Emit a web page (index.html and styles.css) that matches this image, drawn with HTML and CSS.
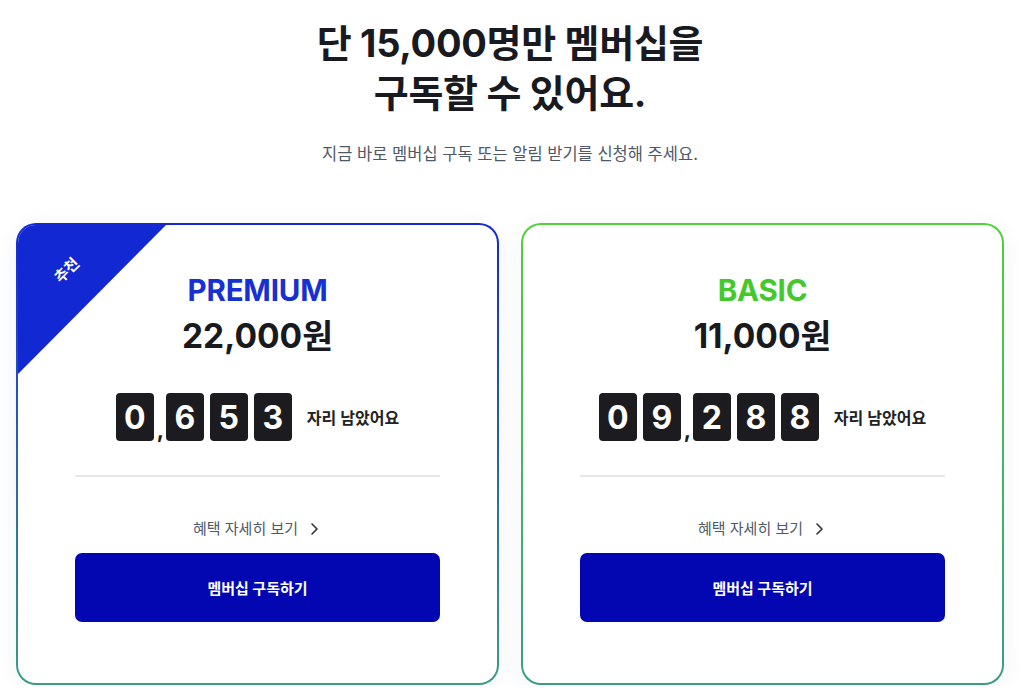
FILE: index.html
```html
<!DOCTYPE html>
<html lang="ko">
<head>
<meta charset="UTF-8">
<meta name="viewport" content="width=device-width, initial-scale=1.0">
<title>멤버십 구독</title>
<link rel="stylesheet" href="styles.css">
</head>
<body>
<div class="page">
  <h1 class="title">단 15,000명만 멤버십을<br>구독할 수 있어요.</h1>
  <p class="subtitle">지금 바로 멤버십 구독 또는 알림 받기를 신청해 주세요.</p>

  <div class="plans">
    <div class="card premium">
      <div class="badge"><span>추천</span></div>
      <h2 class="plan-name">PREMIUM</h2>
      <p class="price">22,000원</p>
      <div class="counter">
        <span class="digit">0</span><span class="comma">,</span><span class="digit">6</span><span class="digit">5</span><span class="digit">3</span>
        <span class="left">자리 남았어요</span>
      </div>
      <hr class="divider">
      <a class="more" href="#">혜택 자세히 보기
        <svg width="16" height="16" viewBox="0 0 16 16"><polyline points="6,3 11,8 6,13" fill="none" stroke="#333" stroke-width="1.6" stroke-linecap="round" stroke-linejoin="round"/></svg>
      </a>
      <button class="subscribe">멤버십 구독하기</button>
    </div>

    <div class="card basic">
      <h2 class="plan-name">BASIC</h2>
      <p class="price">11,000원</p>
      <div class="counter">
        <span class="digit">0</span><span class="digit">9</span><span class="comma">,</span><span class="digit">2</span><span class="digit">8</span><span class="digit">8</span>
        <span class="left">자리 남았어요</span>
      </div>
      <hr class="divider">
      <a class="more" href="#">혜택 자세히 보기
        <svg width="16" height="16" viewBox="0 0 16 16"><polyline points="6,3 11,8 6,13" fill="none" stroke="#333" stroke-width="1.6" stroke-linecap="round" stroke-linejoin="round"/></svg>
      </a>
      <button class="subscribe">멤버십 구독하기</button>
    </div>
  </div>
</div>
</body>
</html>
```

FILE: styles.css
```css
body {
  margin: 0;
  padding: 0;
  background: #fff;
  font-family: Inter, "Noto Sans CJK KR", sans-serif;
  color: #191a1f;
}
.page {
  padding: 18px 17px 0 16px;
}
.title {
  margin: 0;
  text-align: center;
  font-size: 38px;
  line-height: 50px;
  font-weight: 700;
  color: #191a1f;
  letter-spacing: -0.3px;
}
.subtitle {
  margin: 24px 0 0;
  text-align: center;
  font-size: 16.5px;
  line-height: 24px;
  color: #4e5968;
}
.plans {
  display: grid;
  grid-template-columns: 1fr 1fr;
  gap: 22px;
  margin-top: 57px;
}
.card {
  position: relative;
  overflow: hidden;
  border: 2px solid transparent;
  border-radius: 20px;
  padding: 45px 57px 61px;
  text-align: center;
  box-shadow: 0 4px 24px rgba(40, 50, 110, 0.06);
}
.premium {
  background: linear-gradient(#fff, #fff) padding-box,
              linear-gradient(180deg, #1528d3, #3b9c86) border-box;
}
.basic {
  background: linear-gradient(#fff, #fff) padding-box,
              linear-gradient(180deg, #4fd13a, #3b9c86) border-box;
}
.badge {
  position: absolute;
  top: 0;
  left: 0;
  width: 148px;
  height: 149px;
  background: #1228d2;
  clip-path: polygon(0 0, 100% 0, 0 100%);
}
.badge span {
  position: absolute;
  top: 34px;
  left: 34px;
  color: #fff;
  font-size: 15px;
  font-weight: 700;
  transform: rotate(-45deg);
}
.plan-name {
  margin: 0;
  font-size: 29.5px;
  line-height: 40px;
  font-weight: 700;
  letter-spacing: -0.2px;
}
.premium .plan-name {
  color: #1630d4;
}
.basic .plan-name {
  color: #44c92d;
}
.price {
  margin: 4px 0 0;
  font-size: 33.5px;
  line-height: 44px;
  font-weight: 700;
  color: #191a1f;
}
.counter {
  display: flex;
  justify-content: center;
  align-items: flex-end;
  gap: 6px;
  margin-top: 35px;
  height: 48px;
}
.digit {
  display: flex;
  align-items: center;
  justify-content: center;
  width: 38px;
  height: 48px;
  border-radius: 4px;
  background: #1c1c20;
  color: #fff;
  font-size: 32px;
  font-weight: 700;
}
.comma {
  width: 2px;
  font-size: 22px;
  font-weight: 700;
  line-height: 10px;
  color: #1c1c20;
  margin: 0 1px 6px -3px;
}
.left {
  align-self: center;
  margin-left: 9px;
  font-size: 16px;
  font-weight: 600;
  color: #222;
}
.divider {
  margin: 34px 0 0;
  border: 0;
  height: 2px;
  background: #e6e8ee;
}
.more {
  display: inline-flex;
  align-items: center;
  gap: 8px;
  margin-top: 41px;
  font-size: 15px;
  line-height: 22px;
  color: #4e5968;
  text-decoration: none;
}
.subscribe {
  display: block;
  width: 100%;
  height: 69px;
  margin-top: 13px;
  border: none;
  border-radius: 7px;
  background: #0307b1;
  color: #fff;
  font-family: inherit;
  font-size: 15px;
  font-weight: 700;
  cursor: pointer;
}
```
